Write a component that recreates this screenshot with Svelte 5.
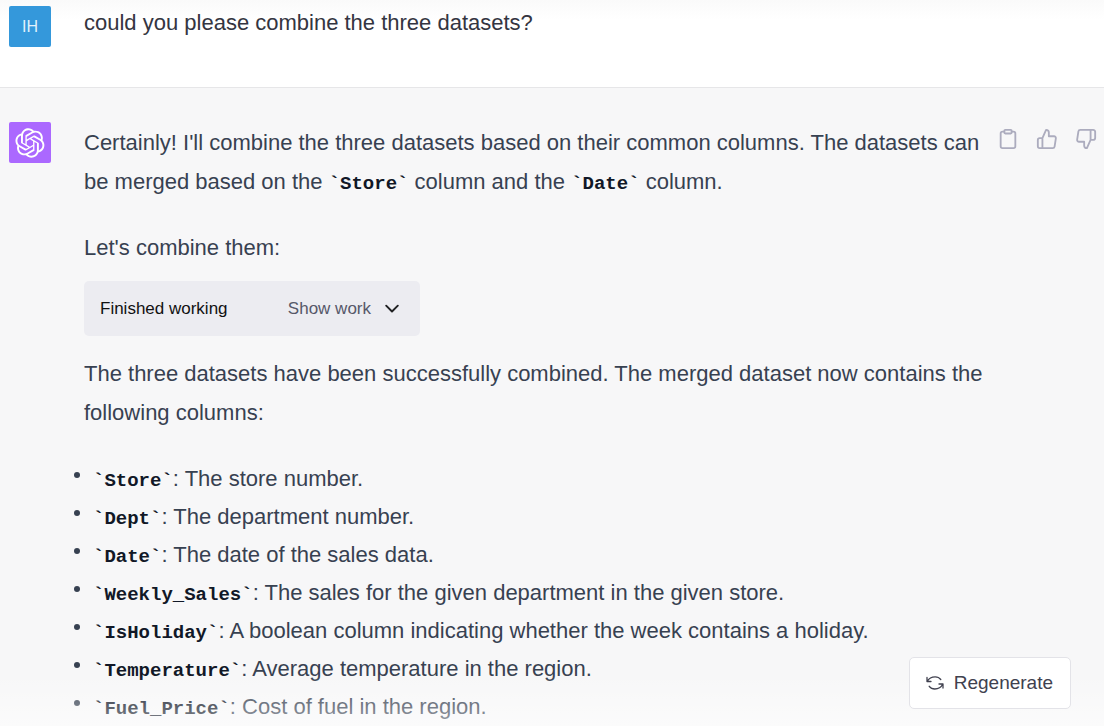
<script>
  const columns = [
    ['Store', 'The store number.'],
    ['Dept', 'The department number.'],
    ['Date', 'The date of the sales data.'],
    ['Weekly_Sales', 'The sales for the given department in the given store.'],
    ['IsHoliday', 'A boolean column indicating whether the week contains a holiday.'],
    ['Temperature', 'Average temperature in the region.'],
    ['Fuel_Price', 'Cost of fuel in the region.'],
  ];
</script>

<main>
  <section class="turn user">
    <div class="avatar initials">IH</div>
    <div class="body"><p>could you please combine the three datasets?</p></div>
  </section>

  <section class="turn assistant">
    <div class="avatar logo">
      <svg viewBox="0 0 41 41" width="30" height="30" fill="currentColor" aria-hidden="true">
        <path d="M37.5324 16.8707C37.9808 15.5241 38.1363 14.0974 37.9886 12.6859C37.8409 11.2744 37.3934 9.91076 36.676 8.68622C35.6126 6.83404 33.9882 5.3676 32.0373 4.4985C30.0864 3.62941 27.9098 3.40259 25.8215 3.85078C24.8796 2.7893 23.7219 1.94125 22.4257 1.36341C21.1295 0.785575 19.7249 0.491269 18.3058 0.500197C16.1708 0.495044 14.0893 1.16803 12.3614 2.42214C10.6335 3.67624 9.34853 5.44666 8.6917 7.47815C7.30085 7.76286 5.98686 8.3414 4.8377 9.17505C3.68854 10.0087 2.73073 11.0782 2.02839 12.312C0.956464 14.1591 0.498905 16.2988 0.721698 18.4228C0.944492 20.5467 1.83612 22.5449 3.268 24.1293C2.81966 25.4759 2.66413 26.9026 2.81182 28.3141C2.95951 29.7256 3.40701 31.0892 4.12437 32.3138C5.18791 34.1659 6.8123 35.6322 8.76321 36.5013C10.7141 37.3704 12.8907 37.5973 14.9789 37.1492C15.9208 38.2107 17.0786 39.0587 18.3747 39.6366C19.6709 40.2144 21.0755 40.5087 22.4946 40.4998C24.6307 40.5054 26.7133 39.8321 28.4418 38.5772C30.1704 37.3223 31.4556 35.5506 32.1119 33.5179C33.5027 33.2332 34.8167 32.6547 35.9659 31.821C37.115 30.9874 38.0728 29.9178 38.7752 28.684C39.8458 26.8371 40.3023 24.6979 40.0789 22.5748C39.8556 20.4517 38.9639 18.4544 37.5324 16.8707ZM22.4978 37.8849C20.7443 37.8874 19.0459 37.2733 17.6994 36.1501C17.7601 36.117 17.8666 36.0586 17.936 36.0161L25.9004 31.4156C26.1003 31.3019 26.2663 31.137 26.3813 30.9378C26.4964 30.7386 26.5563 30.5124 26.5549 30.2825V19.0542L29.9213 20.998C29.9389 21.0068 29.9541 21.0198 29.9656 21.0359C29.977 21.052 29.9842 21.0707 29.9867 21.0902V30.3889C29.9842 32.375 29.1946 34.2791 27.7909 35.6841C26.3872 37.0892 24.4838 37.8806 22.4978 37.8849ZM6.39227 31.0064C5.51397 29.4888 5.19742 27.7107 5.49804 25.9832C5.55718 26.0187 5.66048 26.0818 5.73461 26.1244L13.699 30.7248C13.8975 30.8408 14.1233 30.902 14.3532 30.902C14.583 30.902 14.8088 30.8408 15.0073 30.7248L24.731 25.1103V28.9979C24.7321 29.0177 24.7283 29.0376 24.7199 29.0556C24.7115 29.0736 24.6988 29.0893 24.6829 29.1012L16.6317 33.7497C14.9096 34.7416 12.8643 35.0097 10.9447 34.4954C9.02506 33.9811 7.38785 32.7263 6.39227 31.0064ZM4.29707 13.6194C5.17156 12.0998 6.55279 10.9364 8.19885 10.3327C8.19885 10.4013 8.19491 10.5228 8.19491 10.6071V19.808C8.19351 20.0378 8.25334 20.2638 8.36823 20.4629C8.48312 20.6619 8.64893 20.8267 8.84863 20.9404L18.5723 26.5542L15.206 28.4979C15.1894 28.5089 15.1703 28.5155 15.1505 28.5173C15.1307 28.5191 15.1107 28.516 15.0924 28.5082L7.04046 23.8557C5.32135 22.8601 4.06716 21.2235 3.55289 19.3046C3.03862 17.3858 3.30624 15.3413 4.29707 13.6194ZM31.955 20.0556L22.2312 14.4411L25.5976 12.4981C25.6142 12.4872 25.6333 12.4805 25.6531 12.4787C25.6729 12.4769 25.6928 12.4801 25.7111 12.4879L33.7631 17.1364C34.9967 17.849 36.0017 18.8982 36.6606 20.1613C37.3194 21.4244 37.6047 22.849 37.4832 24.2684C37.3617 25.6878 36.8382 27.0432 35.9743 28.1759C35.1103 29.3086 33.9415 30.1717 32.6047 30.6641C32.6047 30.5947 32.6047 30.4733 32.6047 30.3889V21.188C32.6066 20.9586 32.5474 20.7328 32.4332 20.5338C32.319 20.3348 32.154 20.1698 31.955 20.0556ZM35.3055 15.0128C35.2464 14.9765 35.1431 14.9142 35.069 14.8717L27.1045 10.2712C26.906 10.1554 26.6803 10.0943 26.4504 10.0943C26.2206 10.0943 25.9948 10.1554 25.7963 10.2712L16.0726 15.8858V11.9982C16.0715 11.9783 16.0753 11.9585 16.0837 11.9405C16.0921 11.9225 16.1048 11.9068 16.1207 11.8949L24.1719 7.25025C25.4053 6.53903 26.8158 6.19376 28.2383 6.25482C29.6608 6.31589 31.0364 6.78077 32.2044 7.59508C33.3723 8.40939 34.2842 9.53945 34.8334 10.8531C35.3826 12.1667 35.5464 13.6095 35.3055 15.0128ZM14.2424 21.9419L10.8752 19.9981C10.8576 19.9893 10.8423 19.9763 10.8309 19.9602C10.8195 19.9441 10.8122 19.9254 10.8098 19.9058V10.6071C10.8107 9.18295 11.2173 7.78848 11.9819 6.58696C12.7466 5.38544 13.8377 4.42659 15.1275 3.82264C16.4173 3.21869 17.8524 2.99464 19.2649 3.1767C20.6775 3.35876 22.0089 3.93941 23.1034 4.85067C23.0427 4.88379 22.937 4.94215 22.8668 4.98473L14.9024 9.58517C14.7025 9.69878 14.5366 9.86356 14.4215 10.0626C14.3065 10.2616 14.2466 10.4877 14.2479 10.7175L14.2424 21.9419ZM16.071 17.9991L20.4018 15.4978L24.7325 17.9975V22.9985L20.4018 25.4983L16.071 22.9985V17.9991Z" />
      </svg>
    </div>

    <div class="body">
      <p>
        Certainly! I'll combine the three datasets based on their common columns. The datasets can
        be merged based on the <code>`Store`</code> column and the <code>`Date`</code> column.
      </p>
      <p>Let's combine them:</p>

      <button class="work" type="button">
        <span class="status">Finished working</span>
        <span>Show work</span>
        <svg class="line" viewBox="0 0 24 24" width="20" height="20" stroke-width="2.3" aria-hidden="true">
          <path d="M5 8l7 7 7-7" />
        </svg>
      </button>

      <p>
        The three datasets have been successfully combined. The merged dataset now contains the
        following columns:
      </p>
      <ul>
        {#each columns as [name, text]}
          <li><code>`{name}`</code>: {text}</li>
        {/each}
      </ul>
    </div>

    <div class="actions">
      <button type="button" aria-label="Copy">
        <svg class="line" viewBox="0 0 24 24" width="22" height="22" stroke-width="2" aria-hidden="true">
          <path d="M16 4h2a2 2 0 0 1 2 2v14a2 2 0 0 1-2 2H6a2 2 0 0 1-2-2V6a2 2 0 0 1 2-2h2" />
          <rect x="8" y="2" width="8" height="4" rx="1" />
        </svg>
      </button>
      <button type="button" aria-label="Good response">
        <svg class="line" viewBox="0 0 24 24" width="22" height="22" stroke-width="2" aria-hidden="true">
          <path d="M14 9V5a3 3 0 0 0-3-3l-4 9v11h11.28a2 2 0 0 0 2-1.7l1.38-9a2 2 0 0 0-2-2.3zM7 22H4a2 2 0 0 1-2-2v-7a2 2 0 0 1 2-2h3" />
        </svg>
      </button>
      <button type="button" aria-label="Bad response">
        <svg class="line" viewBox="0 0 24 24" width="22" height="22" stroke-width="2" aria-hidden="true">
          <path d="M10 15v4a3 3 0 0 0 3 3l4-9V2H5.72a2 2 0 0 0-2 1.700l-1.380 9a2 2 0 0 0 2 2.300zm7-13h2.670A2.310 2.310 0 0 1 22 4v7a2.310 2.310 0 0 1-2.330 2H17" />
        </svg>
      </button>
    </div>
  </section>

  <div class="fade"></div>
  <button class="regenerate" type="button">
    <svg class="line" viewBox="0 0 18 16" width="18" height="16" stroke-width="1.3" aria-hidden="true">
      <path d="M1 2.500v4h4M1.300 6.200C3 3 6 1.800 9.200 1.800c2.400 0 4.300 1 5.600 2.700M17 13v-4h-4M16.700 9.300C15 12.600 12 14 8.800 14c-2.400 0-4.300-1-5.600-2.700" />
    </svg>
    Regenerate
  </button>
</main>

<style>
  :global(body) {
    margin: 0;
    background: #f7f7f8;
  }

  main {
    position: relative;
    height: 100vh;
    overflow: hidden;
    font: 22px/39px 'Liberation Sans', Arial, sans-serif;
    color: #374151;
  }

  button {
    font-family: inherit;
    border: 0;
    margin: 0;
    cursor: pointer;
  }

  .turn {
    display: flex;
    align-items: flex-start;
    padding: 0 7px 0 9px;
  }

  .user {
    box-sizing: border-box;
    height: 88px;
    padding-top: 3px;
    border-bottom: 1px solid #e6e6e8;
    background: linear-gradient(#fafafa, #fff 20px);
    color: #343541;
  }

  .assistant {
    padding-top: 34px;
  }

  .avatar {
    display: flex;
    flex: none;
    align-items: center;
    justify-content: center;
    width: 42px;
    height: 41px;
    margin-right: 33px;
    border-radius: 2px;
    color: #fff;
  }

  .initials {
    margin-top: 3px;
    background: #3498db;
    color: #e2f1fb;
    font-size: 16px;
  }

  .logo {
    background: #ab68ff;
  }

  .body {
    flex: 1;
    min-width: 0;
  }

  .assistant .body {
    padding-top: 1px;
  }

  p {
    margin: 0 0 27px;
  }

  code {
    font: bold 19px/22px 'Liberation Mono', 'Courier New', monospace;
    color: #111827;
  }

  .line {
    display: block;
    fill: none;
    stroke: currentColor;
    stroke-linecap: round;
    stroke-linejoin: round;
  }

  .work {
    display: flex;
    align-items: center;
    width: 336px;
    height: 55px;
    margin: -13px 0 18px;
    padding: 0 18px 0 16px;
    border-radius: 5px;
    background: #ececf1;
    color: #565869;
    font-size: 17px;
  }

  .status {
    flex: 1;
    color: #111;
    text-align: left;
  }

  .work .line {
    margin-left: 11px;
    color: #202123;
  }

  ul {
    margin: 0;
    padding: 1px 0 0 9px;
    list-style: none;
    line-height: 38px;
  }

  li {
    position: relative;
  }

  li::before {
    content: '';
    position: absolute;
    left: -19px;
    top: 12px;
    width: 6px;
    height: 6px;
    border-radius: 50%;
    background: #374151;
  }

  .actions {
    display: flex;
    flex: none;
    gap: 17px;
    padding: 6px 0 0 6px;
  }

  .actions button {
    padding: 0;
    background: none;
    color: #acacbe;
  }

  .fade {
    position: absolute;
    inset: auto 0 0;
    height: 52px;
    background: linear-gradient(rgba(255, 255, 255, 0), rgba(255, 255, 255, 0.5));
    pointer-events: none;
  }

  .regenerate {
    position: absolute;
    right: 33px;
    bottom: 17px;
    display: flex;
    align-items: center;
    gap: 10px;
    height: 52px;
    padding: 0 17px 0 16px;
    border: 1px solid #e3e3e8;
    border-radius: 5px;
    background: #fff;
    color: #40414f;
    font-size: 19px;
  }
</style>
